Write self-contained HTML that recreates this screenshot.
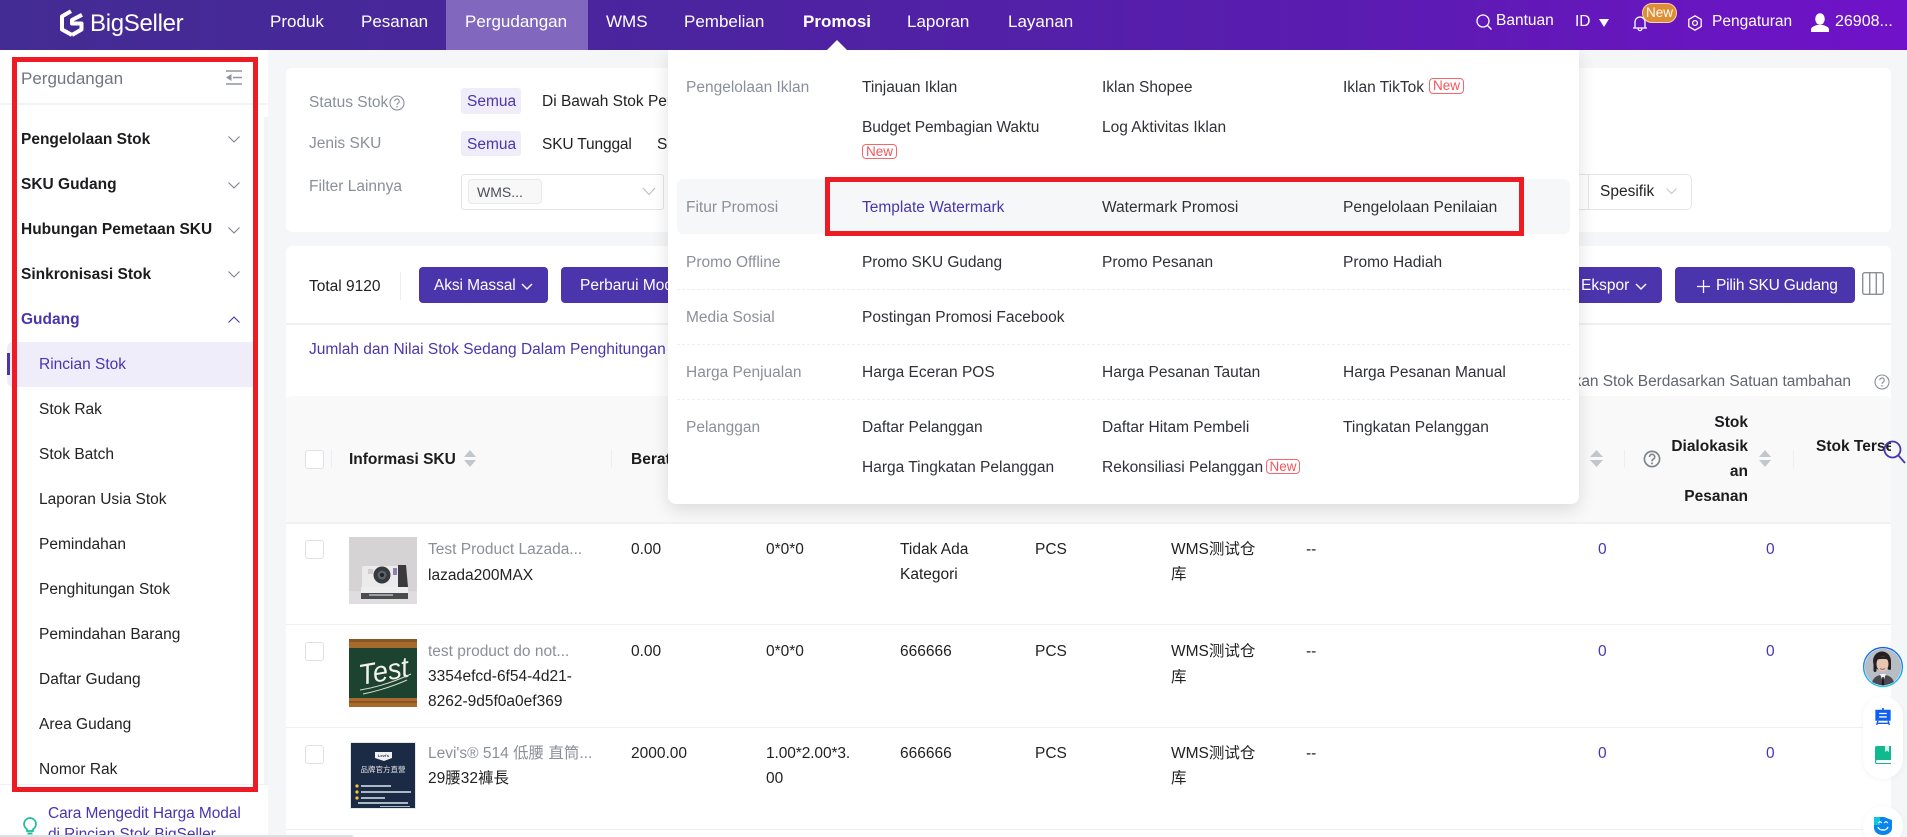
<!DOCTYPE html>
<html lang="id">
<head>
<meta charset="utf-8">
<title>BigSeller</title>
<style>
html,body{margin:0;padding:0;width:1907px;height:837px;overflow:hidden;background:#f5f6f8}
body{position:relative;font-family:"Liberation Sans","Noto Sans CJK SC",sans-serif;font-size:15.5px;color:#222}
div,span,svg{box-sizing:border-box}
.a{position:absolute}
.t{position:absolute;white-space:nowrap;line-height:20px;margin-top:1px}
.h{margin-top:0}
.b{font-weight:700;color:#1c1c1f}
.g{color:#8a9099}
.p{color:#4b35ad}
.d{color:#2f3136}
.n{position:absolute;white-space:nowrap;line-height:20px;font-size:17px;color:#fff}
.new{position:absolute;border:1px solid #f4676c;border-radius:4px;color:#f4555b;font-size:13.5px;line-height:14px;text-align:center;background:#fff}
.cb{position:absolute;left:305px;width:19px;height:19px;border:1px solid #dfe1e6;border-radius:3px;background:#fff}
.dash{position:absolute;left:677px;width:893px;border-top:1px dashed #eeeff1}
.line{position:absolute;left:286px;width:1605px;height:1px;background:#eff0f2}
.btn{position:absolute;top:267px;height:36px;background:#4b35ad;border-radius:4px}
.w{color:#fff}
svg{position:absolute;overflow:visible}
</style>
</head>
<body>

<!-- page cards -->
<div class="a" style="left:286px;top:68px;width:1605px;height:164px;background:#fff;border-radius:6px"></div>
<div class="a" style="left:286px;top:246px;width:1605px;height:591px;background:#fff;border-radius:6px 6px 0 0"></div>

<!-- filters -->
<div class="t g" style="left:309px;top:92px">Status Stok</div>
<svg style="left:389px;top:95px" width="16" height="16" viewBox="0 0 16 16"><circle cx="8" cy="8" r="7" fill="none" stroke="#8a9099" stroke-width="1.1"/><path d="M5.8 6.2a2.2 2.2 0 1 1 3.3 1.9c-.8.5-1.1.9-1.1 1.8" fill="none" stroke="#8a9099" stroke-width="1.1"/><circle cx="8" cy="11.8" r=".8" fill="#8a9099"/></svg>
<div class="a" style="left:461px;top:88px;width:60px;height:26px;background:#f0edfb;border-radius:3px"></div>
<div class="t p" style="left:467px;top:91px">Semua</div>
<div class="t" style="left:542px;top:91px">Di Bawah Stok Pengaman</div>
<div class="t g" style="left:309px;top:133px">Jenis SKU</div>
<div class="a" style="left:461px;top:131px;width:60px;height:25px;background:#f0edfb;border-radius:3px"></div>
<div class="t p" style="left:467px;top:134px">Semua</div>
<div class="t" style="left:542px;top:134px;letter-spacing:-.15px">SKU Tunggal</div>
<div class="t" style="left:657px;top:134px">SKU</div>
<div class="t g" style="left:309px;top:176px">Filter Lainnya</div>
<div class="a" style="left:461px;top:174px;width:203px;height:36px;border:1px solid #e3e5ea;border-radius:3px;background:#fff"></div>
<div class="a" style="left:468px;top:179px;width:74px;height:25px;border:1px solid #e8e9ec;border-radius:4px;background:#f8f8f9"></div>
<div class="t" style="left:477px;top:181px;font-size:14px;color:#4b4f57">WMS...</div>
<svg style="left:642px;top:187px" width="14" height="9" viewBox="0 0 14 9"><path d="M1 1l6 6.5L13 1" fill="none" stroke="#b9bdc4" stroke-width="1.1"/></svg>
<div class="a" style="left:1570px;top:174px;width:122px;height:36px;border:1px solid #e3e5ea;border-radius:0 5px 5px 0;background:#fff"></div>
<div class="a" style="left:1588px;top:174px;width:1px;height:36px;background:#e3e5ea"></div>
<div class="t" style="left:1600px;top:181px">Spesifik</div>
<svg style="left:1666px;top:188px" width="11" height="7" viewBox="0 0 11 7"><path d="M.5.5l5 5 5-5" fill="none" stroke="#c3c6cc" stroke-width="1.1"/></svg>

<!-- toolbar -->
<div class="t" style="left:309px;top:276px">Total 9120</div>
<div class="a" style="left:400px;top:272px;width:1px;height:28px;background:#eceef1"></div>
<div class="btn" style="left:419px;width:129px"></div>
<div class="t w" style="left:434px;top:275px;letter-spacing:-.1px">Aksi Massal</div>
<svg style="left:521px;top:283px" width="12" height="8" viewBox="0 0 12 8"><path d="M1 1l5 5 5-5" fill="none" stroke="#fff" stroke-width="1.4"/></svg>
<div class="btn" style="left:561px;width:130px"></div>
<div class="t w" style="left:580px;top:275px">Perbarui Modal</div>
<div class="btn" style="left:1540px;width:122px"></div>
<div class="t w" style="left:1581px;top:275px">Ekspor</div>
<svg style="left:1635px;top:283px" width="12" height="8" viewBox="0 0 12 8"><path d="M1 1l5 5 5-5" fill="none" stroke="#fff" stroke-width="1.4"/></svg>
<div class="btn" style="left:1675px;width:180px"></div>
<svg style="left:1697px;top:280px" width="13" height="13" viewBox="0 0 13 13"><path d="M6.5 0v13M0 6.500h13" stroke="#fff" stroke-width="1.3"/></svg>
<div class="t w" style="left:1716px;top:275px;letter-spacing:-.2px">Pilih SKU Gudang</div>
<svg style="left:1862px;top:272px" width="22" height="23" viewBox="0 0 22 23"><rect x=".7" y=".7" width="20.6" height="21.6" rx="2" fill="none" stroke="#8b9098" stroke-width="1.4"/><path d="M7.700 1v21M14.300 1v21" stroke="#8b9098" stroke-width="1.4"/></svg>
<div class="line" style="top:323px;height:2px"></div>

<div class="t p" style="left:309px;top:339px">Jumlah dan Nilai Stok Sedang Dalam Penghitungan</div>
<div class="t" style="right:56px;top:371px;color:#5f6670;letter-spacing:-.05px">Tampilkan Stok Berdasarkan Satuan tambahan</div>
<svg style="left:1874px;top:374px" width="16" height="16" viewBox="0 0 16 16"><circle cx="8" cy="8" r="7" fill="none" stroke="#8a9099" stroke-width="1.1"/><path d="M5.800 6.200a2.200 2.200 0 1 1 3.300 1.900c-.8.5-1.100.9-1.100 1.800" fill="none" stroke="#8a9099" stroke-width="1.1"/><circle cx="8" cy="11.800" r=".8" fill="#8a9099"/></svg>

<!-- table header -->
<div class="a" style="left:286px;top:396px;width:1605px;height:126px;background:#f9f9f9;border-radius:6px 6px 0 0"></div>
<div class="line" style="top:522px;height:2px;background:#f0f1f3"></div>
<div class="cb" style="top:450px"></div>
<div class="a" style="left:331px;top:450px;width:1px;height:18px;background:#eceef1"></div>
<div class="t b" style="left:349px;top:449px">Informasi SKU</div>
<svg style="left:464px;top:450px" width="12" height="17" viewBox="0 0 12 17"><path d="M6 0l6 7H0zM6 17L0 10h12z" fill="#c2c6cd"/></svg>
<div class="a" style="left:611px;top:450px;width:1px;height:18px;background:#eceef1"></div>
<div class="t b" style="left:631px;top:449px">Berat</div>
<svg style="left:1590px;top:450px" width="13" height="17" viewBox="0 0 13 17"><path d="M6.500 0l6.500 7H0zM6.500 17L0 10h13z" fill="#c2c6cd"/></svg>
<div class="a" style="left:1624px;top:450px;width:1px;height:18px;background:#eceef1"></div>
<svg style="left:1643px;top:450px" width="18" height="18" viewBox="0 0 18 18"><circle cx="9" cy="9" r="7.600" fill="none" stroke="#7f858e" stroke-width="1.7"/><path d="M6.500 7a2.600 2.600 0 1 1 3.800 2.200c-.9.5-1.300 1-1.300 2" fill="none" stroke="#7f858e" stroke-width="1.6"/><circle cx="9" cy="13.400" r="1" fill="#7f858e"/></svg>
<div class="t b" style="right:159px;top:412px">Stok</div>
<div class="t b" style="right:159px;top:436px">Dialokasik</div>
<div class="t b" style="right:159px;top:461px">an</div>
<div class="t b" style="right:159px;top:486px">Pesanan</div>
<svg style="left:1759px;top:450px" width="12" height="17" viewBox="0 0 12 17"><path d="M6 0l6 7H0zM6 17L0 10h12z" fill="#c2c6cd"/></svg>
<div class="a" style="left:1793px;top:450px;width:1px;height:18px;background:#eceef1"></div>
<div class="a" style="left:1816px;top:436px;width:75px;height:21px;overflow:hidden"><div class="t b" style="left:0;top:0">Stok Tersedia</div></div>

<!-- rows -->
<div class="line" style="top:624px"></div>
<div class="line" style="top:727px"></div>
<div class="line" style="top:829px"></div>

<!-- row 1 -->
<div class="cb" style="top:540px"></div>
<svg style="left:349px;top:537px" width="68" height="67" viewBox="0 0 68 67">
<rect width="68" height="67" fill="#d5d3d4"/><rect y="54" width="68" height="13" fill="#dfdddd"/>
<rect x="13" y="29" width="37" height="22" rx="2" fill="#ecebeb"/><path d="M49 28h8l2 22H49z" fill="#3b3a3d"/>
<circle cx="33" cy="38" r="8.500" fill="#39383b"/><circle cx="33" cy="38" r="4.500" fill="#56636d"/><circle cx="33" cy="38" r="2" fill="#1e2226"/>
<rect x="19" y="32" width="5" height="5" fill="#cfcfd2"/><rect x="44" y="31" width="4" height="7" fill="#8d7fb0"/>
<rect x="12" y="50" width="47" height="6" fill="#efeeee"/><rect x="12" y="56" width="47" height="6" fill="#4b4c50"/><rect x="20" y="57" width="24" height="2" fill="#9aa0a5"/>
</svg>
<div class="t g" style="left:428px;top:539px">Test Product Lazada...</div>
<div class="t" style="left:428px;top:565px">lazada200MAX</div>
<div class="t" style="left:631px;top:539px">0.00</div>
<div class="t" style="left:766px;top:539px">0*0*0</div>
<div class="t" style="left:900px;top:539px">Tidak Ada</div>
<div class="t" style="left:900px;top:564px">Kategori</div>
<div class="t" style="left:1035px;top:539px">PCS</div>
<div class="t" style="left:1171px;top:539px">WMS测试仓</div>
<div class="t" style="left:1171px;top:564px">库</div>
<div class="t" style="left:1306px;top:539px">--</div>
<div class="t p" style="left:1598px;top:539px">0</div>
<div class="t p" style="left:1766px;top:539px">0</div>

<!-- row 2 -->
<div class="cb" style="top:642px"></div>
<svg style="left:349px;top:639px" width="68" height="68" viewBox="0 0 68 68">
<rect width="68" height="68" fill="#a86a2c"/><rect y="0" width="68" height="3" fill="#8a5520"/><rect y="9" width="68" height="50" fill="#1c4230"/><rect y="62" width="68" height="2" fill="#8a5520"/>
<text x="10" y="42" font-family="Liberation Sans,sans-serif" font-style="italic" font-size="29" fill="#f2f2ea" transform="rotate(-10 34 34)" textLength="50" lengthAdjust="spacingAndGlyphs">Test</text>
<path d="M11 51Q36 47 62 35M14 55Q38 50 58 41" stroke="#d9ddd0" stroke-width="1" fill="none"/>
</svg>
<div class="t g" style="left:428px;top:641px">test product do not...</div>
<div class="t" style="left:428px;top:666px">3354efcd-6f54-4d21-</div>
<div class="t" style="left:428px;top:691px">8262-9d5f0a0ef369</div>
<div class="t" style="left:631px;top:641px">0.00</div>
<div class="t" style="left:766px;top:641px">0*0*0</div>
<div class="t" style="left:900px;top:641px">666666</div>
<div class="t" style="left:1035px;top:641px">PCS</div>
<div class="t" style="left:1171px;top:641px">WMS测试仓</div>
<div class="t" style="left:1171px;top:667px">库</div>
<div class="t" style="left:1306px;top:641px">--</div>
<div class="t p" style="left:1598px;top:641px">0</div>
<div class="t p" style="left:1766px;top:641px">0</div>

<!-- row 3 -->
<div class="cb" style="top:745px"></div>
<svg style="left:350px;top:742px" width="66" height="67" viewBox="0 0 66 67">
<rect x=".5" y=".5" width="65" height="66" fill="#1b2b45" stroke="#e4e6ea"/>
<path d="M25 10h17v6l-8 3-9-3z" fill="#f1f1f1"/><text x="33.500" y="15" text-anchor="middle" font-size="4" font-weight="700" fill="#1b2b45" font-family="Liberation Sans,sans-serif">Levi's</text>
<text x="33" y="30" text-anchor="middle" font-size="7.500" fill="#e8e8e8" font-family="Noto Sans CJK TC,sans-serif">品牌官方直營</text>
<g fill="#f5c63c"><circle cx="7" cy="44" r="1.600"/><circle cx="7" cy="50" r="1.600"/><circle cx="7" cy="56" r="1.600"/></g>
<g fill="#aeb7c6"><rect x="11" y="43" width="30" height="2"/><rect x="11" y="49" width="50" height="2"/><rect x="11" y="55" width="24" height="2"/><rect x="8" y="60" width="50" height="2"/><rect x="30" y="64" width="30" height="1"/></g>
</svg>
<div class="t g" style="left:428px;top:743px">Levi's® 514 低腰 直筒...</div>
<div class="t" style="left:428px;top:768px">29腰32褲長</div>
<div class="t" style="left:631px;top:743px">2000.00</div>
<div class="t" style="left:766px;top:743px;letter-spacing:-.1px">1.00*2.00*3.</div>
<div class="t" style="left:766px;top:768px">00</div>
<div class="t" style="left:900px;top:743px">666666</div>
<div class="t" style="left:1035px;top:743px">PCS</div>
<div class="t" style="left:1171px;top:743px">WMS测试仓</div>
<div class="t" style="left:1171px;top:768px">库</div>
<div class="t" style="left:1306px;top:743px">--</div>
<div class="t p" style="left:1598px;top:743px">0</div>
<div class="t p" style="left:1766px;top:743px">0</div>

<!-- right floating -->
<svg style="left:1883px;top:440px" width="22" height="23" viewBox="0 0 22 23"><circle cx="9.500" cy="9.500" r="8" fill="none" stroke="#4b35ad" stroke-width="1.8"/><path d="M15 15l7 8" stroke="#4b35ad" stroke-width="1.8"/></svg>
<svg style="left:1863px;top:647px" width="40" height="40" viewBox="0 0 40 40">
<defs><linearGradient id="gr" x1="0" y1="0" x2="0" y2="1"><stop offset="0" stop-color="#0d62f0"/><stop offset="1" stop-color="#18c4f0"/></linearGradient><clipPath id="cp"><circle cx="20" cy="20" r="18.300"/></clipPath></defs>
<circle cx="20" cy="20" r="19.400" fill="#fff" stroke="url(#gr)" stroke-width="1.4"/>
<g clip-path="url(#cp)"><rect width="40" height="40" fill="#b8bdc4"/>
<ellipse cx="19" cy="14" rx="9" ry="9.500" fill="#262022"/><rect x="10.500" y="14" width="3" height="11" rx="1.500" fill="#262022"/><rect x="25" y="14" width="3" height="9" rx="1.500" fill="#262022"/>
<ellipse cx="19.500" cy="17" rx="6" ry="7.500" fill="#e6c5b3"/>
<path d="M13 13c2-4.500 10-4.500 13 0-3-1.500-9-1.500-13 0z" fill="#262022"/><path d="M17 21.500c1.500 1 3.500 1 5 0" stroke="#a85a58" stroke-width="1" fill="none"/>
<path d="M8 40c1-9 5-12 12-12s11 3 12 12z" fill="#4a4a4e"/><path d="M17 27l3 8 3-8z" fill="#f4f4f4"/><path d="M19.300 30h1.400l.7 9h-3z" fill="#1a1a1c"/>
</g></svg>
<div class="a" style="left:1863px;top:696px;width:40px;height:83px;background:#fff;border-radius:20px;box-shadow:0 1px 6px rgba(0,0,0,.05)"></div>
<svg style="left:1875px;top:708px" width="16" height="17" viewBox="0 0 18 20"><path d="M8 0h2v2h8v13H0V2h8z" fill="#0d5ef5"/><path d="M3 15L1.500 20M15 15l1.500 5M2 18h14" stroke="#0d5ef5" stroke-width="1.6" fill="none"/><path d="M4.500 6.500h9M4.500 10.500h9" stroke="#fff" stroke-width="1.5"/></svg>
<svg style="left:1875px;top:746px" width="16" height="18" viewBox="0 0 16 18"><path d="M2 0h14v14H2.500a1.500 1.500 0 0 0 0 3H16v1H2a2 2 0 0 1-2-2V2a2 2 0 0 1 2-2z" fill="#10b98f"/><path d="M10 0h4v6l-2-1.400L10 6z" fill="#d6f4ea"/></svg>
<div class="a" style="left:1863px;top:806px;width:40px;height:40px;background:#fff;border-radius:20px;box-shadow:0 1px 6px rgba(0,0,0,.05)"></div>
<svg style="left:1874px;top:817px" width="18" height="18" viewBox="0 0 18 18"><path d="M0 0h10l8 3v8c0 4-4 7-9 7s-9-3-9-7z" fill="#0a84ee"/><path d="M0 0h6v8H0z" fill="#10c6dd"/><path d="M4 10c1 4 9 4 10 0" stroke="#fff" stroke-width="1.4" fill="none"/><path d="M4 6l2-1.500L8 6M10 6l2-1.500L14 6" stroke="#fff" stroke-width="1" fill="none"/></svg>

<!-- sidebar -->
<div class="a" style="left:0;top:50px;width:268px;height:787px;background:#fff"></div>
<div class="a" style="left:0;top:103px;width:268px;height:2px;background:#f2f3f5;border-radius:0 0 6px 0"></div>
<div class="a" style="left:264px;top:117px;width:4px;height:667px;background:#f3f4f6"></div>
<div class="a" style="left:0;top:784px;width:268px;height:1px;background:#eef0f2"></div>
<div class="t" style="left:21px;top:68px;font-size:17px;color:#6f7680">Pergudangan</div>
<svg style="left:226px;top:70px" width="16" height="15" viewBox="0 0 16 15"><path d="M0 1h16M7 7.500h9M0 14h16" stroke="#8f959d" stroke-width="1.6"/><path d="M5.500 4v7L0 7.500z" fill="#8f959d"/></svg>
<div class="t b" style="left:21px;top:129px">Pengelolaan Stok</div>
<div class="t b" style="left:21px;top:174px">SKU Gudang</div>
<div class="t b" style="left:21px;top:219px">Hubungan Pemetaan SKU</div>
<div class="t b" style="left:21px;top:264px">Sinkronisasi Stok</div>
<div class="t b" style="left:21px;top:309px;color:#4b35ad">Gudang</div>
<svg style="left:228px;top:136px" width="12" height="7" viewBox="0 0 12 7"><path d="M.5.5L6 6 11.500.5" fill="none" stroke="#7b8189" stroke-width="1.1"/></svg>
<svg style="left:228px;top:182px" width="12" height="7" viewBox="0 0 12 7"><path d="M.5.5L6 6 11.500.5" fill="none" stroke="#7b8189" stroke-width="1.1"/></svg>
<svg style="left:228px;top:227px" width="12" height="7" viewBox="0 0 12 7"><path d="M.5.5L6 6 11.500.5" fill="none" stroke="#7b8189" stroke-width="1.1"/></svg>
<svg style="left:228px;top:271px" width="12" height="7" viewBox="0 0 12 7"><path d="M.5.5L6 6 11.500.5" fill="none" stroke="#7b8189" stroke-width="1.1"/></svg>
<svg style="left:228px;top:316px" width="12" height="7" viewBox="0 0 12 7"><path d="M.5 6.500L6 1l5.500 5.500" fill="none" stroke="#4b35ad" stroke-width="1.1"/></svg>
<div class="a" style="left:7px;top:342px;width:250px;height:45px;background:#f0edfb;border-radius:6px 0 0 6px"></div>
<div class="a" style="left:7px;top:353px;width:3px;height:22px;background:#4b35ad"></div>
<div class="t p" style="left:39px;top:354px">Rincian Stok</div>
<div class="t" style="left:39px;top:399px">Stok Rak</div>
<div class="t" style="left:39px;top:444px">Stok Batch</div>
<div class="t" style="left:39px;top:489px">Laporan Usia Stok</div>
<div class="t" style="left:39px;top:534px">Pemindahan</div>
<div class="t" style="left:39px;top:579px">Penghitungan Stok</div>
<div class="t" style="left:39px;top:624px">Pemindahan Barang</div>
<div class="t" style="left:39px;top:669px">Daftar Gudang</div>
<div class="t" style="left:39px;top:714px">Area Gudang</div>
<div class="t" style="left:39px;top:759px">Nomor Rak</div>
<svg style="left:23px;top:817px" width="14" height="19" viewBox="0 0 14 19"><path d="M7 1a6 6 0 0 1 3 11.200V14H4v-1.800A6 6 0 0 1 7 1z" fill="none" stroke="#17bd98" stroke-width="1.7"/><path d="M4.500 16.500h5" stroke="#17bd98" stroke-width="2"/></svg>
<div class="t p" style="left:48px;top:803px;letter-spacing:-.08px">Cara Mengedit Harga Modal</div>
<div class="t p" style="left:48px;top:824px;letter-spacing:-.08px">di Rincian Stok BigSeller</div>
<div class="a" style="left:0;top:835px;width:353px;height:2px;background:#dfe0e2"></div>

<!-- sidebar red box -->
<div class="a" style="left:12px;top:57px;width:246px;height:735px;border:5px solid #ed1c24"></div>

<!-- dropdown -->
<div class="a" style="left:668px;top:50px;width:911px;height:454px;background:#fff;border-radius:0 0 8px 8px;box-shadow:0 6px 18px rgba(0,0,0,.12)"></div>
<div class="a" style="left:677px;top:179px;width:893px;height:55px;background:#f6f7f9;border-radius:6px"></div>
<div class="dash" style="top:289px"></div>
<div class="dash" style="top:344px"></div>
<div class="dash" style="top:399px"></div>

<div class="t g" style="left:686px;top:77px">Pengelolaan Iklan</div>
<div class="t d" style="left:862px;top:77px;letter-spacing:-.05px">Tinjauan Iklan</div>
<div class="t d" style="left:1102px;top:77px">Iklan Shopee</div>
<div class="t d" style="left:1343px;top:77px">Iklan TikTok</div>
<div class="new" style="left:1429px;top:78px;width:35px;height:16px">New</div>
<div class="t d" style="left:862px;top:117px;letter-spacing:-.1px">Budget Pembagian Waktu</div>
<div class="t d" style="left:1102px;top:117px">Log Aktivitas Iklan</div>
<div class="new" style="left:862px;top:144px;width:35px;height:15px">New</div>

<div class="t g" style="left:686px;top:197px">Fitur Promosi</div>
<div class="t p" style="left:862px;top:197px">Template Watermark</div>
<div class="t d" style="left:1102px;top:197px">Watermark Promosi</div>
<div class="t d" style="left:1343px;top:197px">Pengelolaan Penilaian</div>

<div class="t g" style="left:686px;top:252px">Promo Offline</div>
<div class="t d" style="left:862px;top:252px;letter-spacing:-.08px">Promo SKU Gudang</div>
<div class="t d" style="left:1102px;top:252px">Promo Pesanan</div>
<div class="t d" style="left:1343px;top:252px">Promo Hadiah</div>

<div class="t g" style="left:686px;top:307px">Media Sosial</div>
<div class="t d" style="left:862px;top:307px">Postingan Promosi Facebook</div>

<div class="t g" style="left:686px;top:362px">Harga Penjualan</div>
<div class="t d" style="left:862px;top:362px">Harga Eceran POS</div>
<div class="t d" style="left:1102px;top:362px">Harga Pesanan Tautan</div>
<div class="t d" style="left:1343px;top:362px">Harga Pesanan Manual</div>

<div class="t g" style="left:686px;top:417px">Pelanggan</div>
<div class="t d" style="left:862px;top:417px">Daftar Pelanggan</div>
<div class="t d" style="left:1102px;top:417px">Daftar Hitam Pembeli</div>
<div class="t d" style="left:1343px;top:417px">Tingkatan Pelanggan</div>
<div class="t d" style="left:862px;top:457px">Harga Tingkatan Pelanggan</div>
<div class="t d" style="left:1102px;top:457px">Rekonsiliasi Pelanggan</div>
<div class="new" style="left:1266px;top:459px;width:34px;height:15px">New</div>

<div class="a" style="left:825px;top:177px;width:699px;height:59px;border:5px solid #ed1c24"></div>

<!-- header -->
<div class="a" style="left:0;top:0;width:1907px;height:50px;background:linear-gradient(90deg,#432c93 0%,#4b249f 35%,#5a1cb0 70%,#7012c9 100%)"></div>
<div class="a" style="left:446px;top:0;width:142px;height:50px;background:#8167bd"></div>
<svg style="left:59px;top:9px" width="26" height="28" viewBox="0 0 26 28"><path d="M12 2.200L3 7.400V20.500L13 26" fill="none" stroke="#fff" stroke-width="4" stroke-linejoin="round"/><path d="M23 5.800L13 11v3.500H22.500V20.500L13 26" fill="none" stroke="#fff" stroke-width="4" stroke-linejoin="round"/></svg>
<div class="t h" style="left:90px;top:12px;font-size:24px;line-height:24px;color:#fff;letter-spacing:-.3px">BigSeller</div>
<div class="n" style="left:270px;top:12px">Produk</div>
<div class="n" style="left:361px;top:12px">Pesanan</div>
<div class="n" style="left:465px;top:12px">Pergudangan</div>
<div class="n" style="left:606px;top:12px">WMS</div>
<div class="n" style="left:684px;top:12px">Pembelian</div>
<div class="n" style="left:803px;top:12px;font-weight:700">Promosi</div>
<div class="n" style="left:907px;top:12px">Laporan</div>
<div class="n" style="left:1008px;top:12px">Layanan</div>
<svg style="left:827px;top:40px" width="20" height="10" viewBox="0 0 20 10"><path d="M10 0l10 10H0z" fill="#fff"/></svg>

<svg style="left:1476px;top:14px" width="16" height="16" viewBox="0 0 16 16"><circle cx="7" cy="7" r="6" fill="none" stroke="#fff" stroke-width="1.3"/><path d="M11.500 11.500L15.500 15.500" stroke="#fff" stroke-width="1.3"/></svg>
<div class="t w h" style="left:1496px;top:11px">Bantuan</div>
<div class="t w h" style="left:1575px;top:12px">ID</div>
<svg style="left:1599px;top:19px" width="10" height="8" viewBox="0 0 10 8"><path d="M0 0h10L5 8z" fill="#fff"/></svg>
<svg style="left:1632px;top:15px" width="16" height="16" viewBox="0 0 16 16"><path d="M1 13h14M3 13V7a5 5 0 0 1 10 0v6M6 13c0 3.500 4 3.500 4 0" fill="none" stroke="#fff" stroke-width="1.3"/></svg>
<div class="a" style="left:1642px;top:3px;width:35px;height:20px;background:#de8f35;border:1px solid #f2d9a0;border-radius:10px;color:#fff;font-size:13.500px;line-height:18px;text-align:center">New</div>
<svg style="left:1687px;top:15px" width="16" height="16" viewBox="0 0 16 16"><path d="M8 .8l6.200 3.600v7.200L8 15.200 1.800 11.600V4.400z" fill="none" stroke="#fff" stroke-width="1.3" stroke-linejoin="round"/><circle cx="8" cy="8" r="2.400" fill="none" stroke="#fff" stroke-width="1.3"/></svg>
<div class="t w h" style="left:1712px;top:12px">Pengaturan</div>
<svg style="left:1811px;top:13px" width="18" height="19" viewBox="0 0 18 19"><ellipse cx="9" cy="6" rx="4.800" ry="5.800" fill="#fff"/><path d="M0 19v-2.500c0-2.500 3-3.500 6-4.500h6c3 1 6 2 6 4.500V19z" fill="#fff"/></svg>
<div class="t w h" style="left:1835px;top:12px;font-size:16px">26908...</div>

</body>
</html>
